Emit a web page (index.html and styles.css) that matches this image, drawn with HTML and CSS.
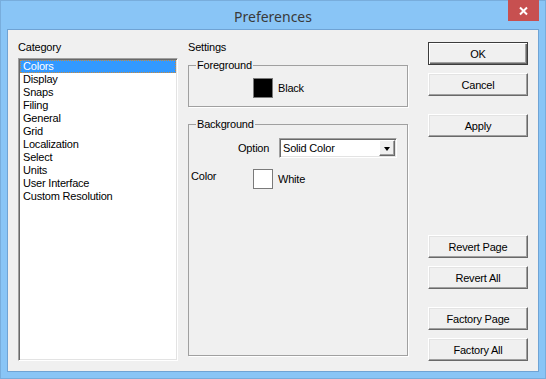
FILE: index.html
```html
<!DOCTYPE html>
<html lang="en">
<head>
  <meta charset="UTF-8">
  <meta name="viewport" content="width=device-width, initial-scale=1.0">
  <title>Preferences</title>
  <link rel="stylesheet" href="styles.css">
</head>
<body>
  <div class="window">
    <div class="titlebar">
      <span class="title">Preferences</span>
      <button class="close-button" title="Close">
        <svg width="31" height="21" viewBox="0 0 31 21">
          <path d="M12 7.5 L19 14.5 M19 7.5 L12 14.5" stroke="#fff" stroke-width="2" fill="none"/>
        </svg>
      </button>
    </div>

    <div class="client">
      <div class="col-category">
        <div class="label">Category</div>
        <ul class="listbox">
          <li class="selected">Colors</li>
          <li>Display</li>
          <li>Snaps</li>
          <li>Filing</li>
          <li>General</li>
          <li>Grid</li>
          <li>Localization</li>
          <li>Select</li>
          <li>Units</li>
          <li>User Interface</li>
          <li>Custom Resolution</li>
        </ul>
      </div>

      <div class="col-settings">
        <div class="label settings-label">Settings</div>
        <fieldset class="group group-fg">
          <legend>Foreground</legend>
          <div class="swatch-row">
            <span class="swatch swatch-black"></span>
            <span class="swatch-name">Black</span>
          </div>
        </fieldset>
        <fieldset class="group group-bg">
          <legend>Background</legend>
          <div class="option-row">
            <span class="option-label">Option</span>
            <div class="combo">
              <span class="combo-text">Solid Color</span>
              <span class="combo-button"><span class="arrow"></span></span>
            </div>
          </div>
          <div class="color-row">
            <span class="color-label">Color</span>
            <span class="swatch swatch-white"></span>
            <span class="swatch-name">White</span>
          </div>
        </fieldset>
      </div>

      <div class="col-buttons">
        <div class="btn-group">
          <button class="btn btn-default">OK</button>
          <button class="btn">Cancel</button>
          <button class="btn btn-spaced">Apply</button>
        </div>
        <div class="btn-group">
          <button class="btn">Revert Page</button>
          <button class="btn">Revert All</button>
          <button class="btn btn-spaced">Factory Page</button>
          <button class="btn">Factory All</button>
        </div>
      </div>
    </div>
  </div>
</body>
</html>
```

FILE: styles.css
```css
* {
  box-sizing: border-box;
}
body {
  margin: 0;
  font-family: "Liberation Sans", Arial, sans-serif;
  font-size: 11px;
  letter-spacing: -0.2px;
  color: #000;
}
.window {
  width: 546px;
  height: 379px;
  background-color: #89c5f6;
  border: 1px solid #78addc;
  display: flex;
  flex-direction: column;
}
.titlebar {
  position: relative;
  height: 28px;
  display: flex;
  justify-content: center;
  align-items: center;
}
.title {
  font-family: "Noto Sans", sans-serif;
  font-size: 14px;
  letter-spacing: 0;
  color: #3a3a3a;
  margin-top: 2px;
}
.close-button {
  position: absolute;
  top: -1px;
  right: 6px;
  width: 31px;
  height: 21px;
  padding: 0;
  border: none;
  background-color: #c75050;
  display: block;
}
.close-button svg {
  display: block;
}
.client {
  flex: 1;
  margin: 0 6px 6px;
  border: 1px solid #6fa3d4;
  background-color: #f0f0f0;
  padding: 11px 10px 10px;
  display: flex;
}
.label {
  line-height: 13px;
  height: 13px;
  margin-bottom: 4px;
}
.settings-label {
  margin-bottom: 5px;
}

/* category list */
.col-category {
  width: 160px;
  display: flex;
  flex-direction: column;
}
.listbox {
  flex: 1;
  list-style: none;
  margin: 0;
  padding: 1px;
  background-color: #fff;
  border: 1px solid;
  border-color: #a0a0a0 #fff #fff #a0a0a0;
  box-shadow: inset 1px 1px 0 #696969, inset -1px -1px 0 #e3e3e3;
}
.listbox li {
  height: 13px;
  line-height: 13px;
  padding-left: 3px;
}
.listbox li.selected {
  background-color: #3399ff;
  color: #fff;
  outline: 1px dotted #c98a3c;
  outline-offset: -1px;
}

/* settings */
.col-settings {
  width: 220px;
  margin-left: 10px;
  display: flex;
  flex-direction: column;
  padding-bottom: 5px;
}
.group {
  margin: 0;
  padding: 0 2px;
  min-width: 0;
  border: 1px solid #a0a0a0;
  box-shadow: 1px 1px 0 #fff;
}
.group legend {
  line-height: 13px;
  padding: 0 1px;
  margin-left: 5px;
}
.group-fg {
  padding-bottom: 8px;
}
.group-bg {
  flex: 1;
  margin-top: 11px;
}
.swatch-row {
  display: flex;
  align-items: center;
  margin-top: 6px;
  padding-left: 62px;
}
.swatch {
  width: 20px;
  height: 20px;
  border: 1px solid #7a7a7a;
  display: block;
}
.swatch-black {
  background-color: #000;
}
.swatch-white {
  background-color: #fff;
}
.swatch-name {
  margin-left: 5px;
  line-height: 13px;
}
.option-row {
  display: flex;
  align-items: center;
  margin-top: 7px;
  padding-left: 47px;
}
.option-label {
  width: 41px;
  line-height: 13px;
}
.combo {
  width: 118px;
  height: 20px;
  background-color: #fff;
  border: 1px solid;
  border-color: #a0a0a0 #fff #fff #a0a0a0;
  box-shadow: inset 1px 1px 0 #696969, inset -1px -1px 0 #e3e3e3;
  display: flex;
  align-items: center;
  padding: 1px;
}
.combo-text {
  flex: 1;
  padding-left: 2px;
  line-height: 13px;
}
.combo-button {
  width: 16px;
  height: 16px;
  background-color: #f0f0f0;
  border: 1px solid;
  border-color: #fff #696969 #696969 #fff;
  box-shadow: inset -1px -1px 0 #a0a0a0;
  display: flex;
  justify-content: center;
  align-items: center;
}
.arrow {
  width: 0;
  height: 0;
  border-left: 3.5px solid transparent;
  border-right: 3.5px solid transparent;
  border-top: 4px solid #000;
  margin-top: 1px;
}
.color-row {
  display: flex;
  align-items: center;
  margin-top: 11px;
}
.color-label {
  width: 62px;
  align-self: flex-start;
  line-height: 13px;
  padding-top: 1px;
}

/* buttons */
.col-buttons {
  width: 100px;
  margin-left: 20px;
  padding-top: 1px;
  display: flex;
  flex-direction: column;
  justify-content: space-between;
}
.btn-group {
  display: flex;
  flex-direction: column;
  gap: 8px;
}
.btn {
  width: 100px;
  height: 23px;
  padding: 0;
  font-family: inherit;
  font-size: 11px;
  letter-spacing: -0.2px;
  color: #000;
  background-color: #f0f0f0;
  border: 1px solid;
  border-color: #fff #696969 #696969 #fff;
  box-shadow: inset -1px -1px 0 #a0a0a0, inset 1px 1px 0 #e3e3e3;
}
.btn-default {
  border-color: #3c3c3c;
  box-shadow: inset 1px 1px 0 #fff, inset -1px -1px 0 #696969, inset -2px -2px 0 #a0a0a0;
}
.btn-spaced {
  margin-top: 10px;
}
```
